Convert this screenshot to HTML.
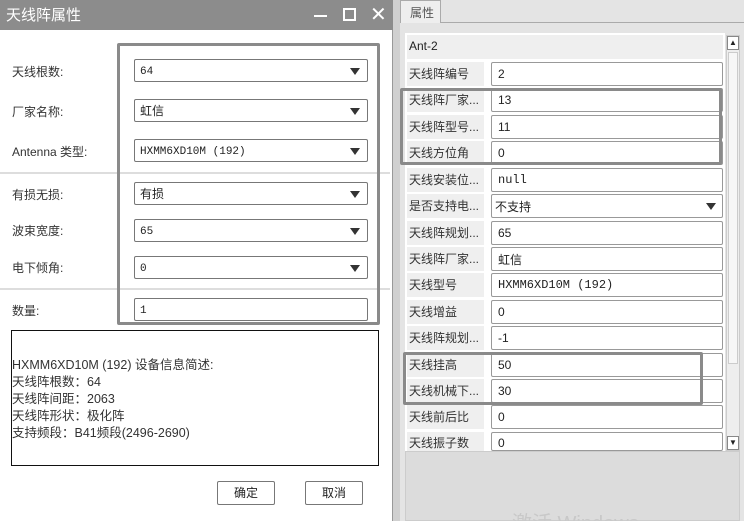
<!DOCTYPE html>
<html><head><meta charset="utf-8"><style>
*{box-sizing:border-box;margin:0;padding:0}
html,body{width:744px;height:521px;overflow:hidden}
body{background:#e6e6e6;font-family:"Liberation Sans","Noto Sans CJK SC",sans-serif;font-size:12px;color:#222;position:relative}
.a{position:absolute}
.sel{position:absolute;left:134px;width:234px;height:23px;border:1px solid #777;border-radius:2px;background:#fff;padding-left:5px;display:flex;align-items:center;font-size:12px}
.sel.mono{padding-top:3px}
.sel .t{position:absolute;right:7px;top:8px;width:0;height:0;border-left:5px solid transparent;border-right:5px solid transparent;border-top:7px solid #333}
.lab{position:absolute;left:12px;font-size:12px;color:#333}
.mono{font-family:"Liberation Mono","Noto Sans CJK SC",monospace;font-size:11px}
.rl{position:absolute;left:407px;width:77px;height:24px;background:#efefef;line-height:24px;padding-left:2px;font-size:12px;color:#333;white-space:nowrap;overflow:hidden}
.rv{position:absolute;left:491px;width:232px;height:24px;border:1px solid #999;border-radius:2px;background:#fff;display:flex;align-items:center;padding-left:6px;font-size:12px}
.btn{position:absolute;top:481px;width:58px;height:24px;border:1px solid #777;border-radius:2px;background:#fff;text-align:center;line-height:22px;font-size:12px}
</style></head><body>
<div class="a" style="left:0;top:0;width:393px;height:521px;background:#fff;border-right:1px solid #999"></div>
<div class="a" style="left:0;top:0;width:393px;height:30px;background:#8c8c8c"></div>
<div class="a" style="left:6px;top:4px;color:#fff;font-size:15px">天线阵属性</div>
<div class="a" style="left:314px;top:15px;width:13px;height:2px;background:#fff"></div>
<div class="a" style="left:343px;top:8px;width:13px;height:13px;border:2px solid #fff"></div>
<div class="a" style="left:370px;top:2px;color:#fff;font-size:20px">✕</div>
<div class="a" style="left:393px;top:0;width:7px;height:521px;background:#d0d0d0"></div>

<div class="lab" style="top:63px">天线根数:</div>
<div class="lab" style="top:103px">厂家名称:</div>
<div class="lab" style="top:143px">Antenna 类型:</div>
<div class="a" style="left:0;top:172px;width:390px;height:2px;background:#ddd"></div>
<div class="lab" style="top:186px">有损无损:</div>
<div class="lab" style="top:222px">波束宽度:</div>
<div class="lab" style="top:259px">电下倾角:</div>
<div class="a" style="left:0;top:288px;width:390px;height:2px;background:#ddd"></div>
<div class="lab" style="top:302px">数量:</div>

<div class="sel mono" style="top:59px">64<span class="t"></span></div>
<div class="sel" style="top:99px">虹信<span class="t"></span></div>
<div class="sel mono" style="top:139px">HXMM6XD10M (192)<span class="t"></span></div>
<div class="sel" style="top:182px">有损<span class="t"></span></div>
<div class="sel mono" style="top:219px">65<span class="t"></span></div>
<div class="sel mono" style="top:256px">0<span class="t"></span></div>
<div class="sel mono" style="top:298px">1</div>
<div class="a" style="left:117px;top:43px;width:263px;height:282px;border:3px solid #8a8a8a;border-radius:2px"></div>

<div class="a" style="left:11px;top:330px;width:368px;height:136px;border:1px solid #111;padding-top:26px;line-height:17px;font-size:12.5px;color:#333">HXMM6XD10M (192) 设备信息简述:<br>天线阵根数：64<br>天线阵间距：2063<br>天线阵形状：极化阵<br>支持频段：B41频段(2496-2690)</div>
<div class="btn" style="left:217px">确定</div>
<div class="btn" style="left:305px">取消</div>

<div class="a" style="left:400px;top:0;width:344px;height:521px;background:#e4e4e4"></div>
<div class="a" style="left:400px;top:22px;width:344px;height:1px;background:#aaa"></div>
<div class="a" style="left:400px;top:0;width:41px;height:23px;background:#eee;border:1px solid #aaa;border-bottom:none;padding:3px 0 0 9px;color:#555">属性</div>
<div class="a" style="left:405px;top:33px;width:320px;height:418px;background:#fff"></div>
<div class="a" style="left:407px;top:35px;width:316px;height:24px;background:#efefef;line-height:22px;padding-left:2px">Ant-2</div>
<div class="a" style="left:726px;top:35px;width:14px;height:416px;background:#eee;border:1px solid #ccc"></div>
<div class="a" style="left:727px;top:36px;width:12px;height:14px;background:#fff;border:1px solid #888;font-size:8px;text-align:center;line-height:12px">▲</div>
<div class="a" style="left:728px;top:52px;width:10px;height:312px;background:#f7f7f7;border:1px solid #ccc"></div>
<div class="a" style="left:727px;top:436px;width:12px;height:14px;background:#fff;border:1px solid #888;font-size:8px;text-align:center;line-height:12px">▼</div>

<div class="rl" style="top:62px">天线阵编号</div><div class="rv" style="top:62px">2</div>
<div class="rl" style="top:88px">天线阵厂家...</div><div class="rv" style="top:88px">13</div>
<div class="rl" style="top:115px">天线阵型号...</div><div class="rv" style="top:115px">11</div>
<div class="rl" style="top:141px">天线方位角</div><div class="rv" style="top:141px">0</div>
<div class="rl" style="top:168px">天线安装位...</div><div class="rv mono" style="top:168px">null</div>
<div class="rl" style="top:194px">是否支持电...</div><div class="rv" style="top:194px;padding-left:3px">不支持<span style="position:absolute;right:6px;top:8px;border-left:5px solid transparent;border-right:5px solid transparent;border-top:7px solid #333"></span></div>
<div class="rl" style="top:221px">天线阵规划...</div><div class="rv" style="top:221px">65</div>
<div class="rl" style="top:247px">天线阵厂家...</div><div class="rv" style="top:247px">虹信</div>
<div class="rl" style="top:273px">天线型号</div><div class="rv mono" style="top:273px">HXMM6XD10M (192)</div>
<div class="rl" style="top:300px">天线增益</div><div class="rv" style="top:300px">0</div>
<div class="rl" style="top:326px">天线阵规划...</div><div class="rv" style="top:326px">-1</div>
<div class="rl" style="top:353px">天线挂高</div><div class="rv" style="top:353px">50</div>
<div class="rl" style="top:379px">天线机械下...</div><div class="rv" style="top:379px">30</div>
<div class="rl" style="top:405px">天线前后比</div><div class="rv" style="top:405px">0</div>
<div class="rl" style="top:432px;height:19px;line-height:22px">天线振子数</div><div class="rv" style="top:432px;height:19px;align-items:flex-end">0</div>
<div class="a" style="left:400px;top:88px;width:322px;height:77px;border:3px solid #8a8a8a;border-radius:2px"></div>
<div class="a" style="left:403px;top:352px;width:300px;height:53px;border:3px solid #8a8a8a;border-radius:2px"></div>
<div class="a" style="left:405px;top:451px;width:335px;height:70px;background:#dcdcdc;border:1px solid #ccc"></div>
<div class="a" style="left:512px;top:507px;color:#c8c8c8;font-size:20px">激活 Windows</div>
</body></html>
